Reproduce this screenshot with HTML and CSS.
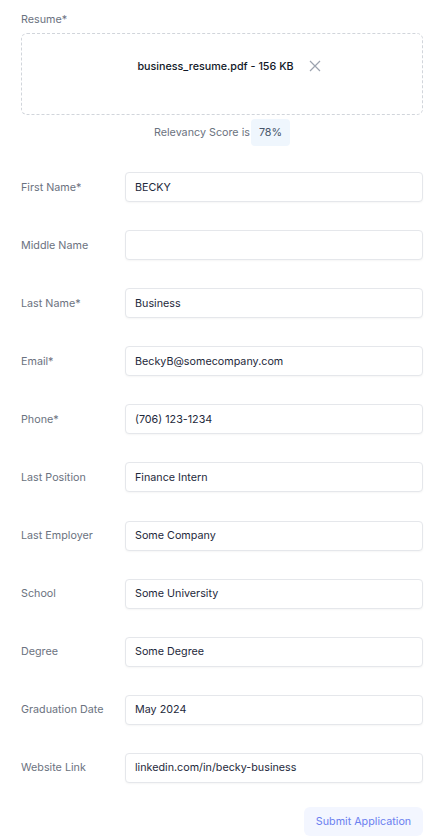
FILE: index.html
```html
<!DOCTYPE html>
<html lang="en">
<head>
    <meta charset="UTF-8">
    <meta name="viewport" content="width=device-width, initial-scale=1.0">
    <title>Application Form</title>
    <link rel="stylesheet" href="styles.css">
</head>
<body>
    <div class="form-container">
        <div class="resume-section">
            <label class="resume-label">Resume*</label>
            <div class="upload-box">
                <div class="file-row">
                    <span class="file-name">business_resume.pdf - 156 KB</span>
                    <button class="remove-btn" aria-label="Remove file">
                        <svg width="12" height="12" viewBox="0 0 12 12">
                            <path d="M1 1 L11 11 M11 1 L1 11" stroke="#9ca3af" stroke-width="1.2" fill="none"/>
                        </svg>
                    </button>
                </div>
            </div>
            <div class="score-row">
                <span>Relevancy Score is</span>
                <span class="score-badge">78%</span>
            </div>
        </div>

        <div class="fields">
            <div class="field-row">
                <label>First Name*</label>
                <input type="text" class="text-input" value="BECKY">
            </div>
            <div class="field-row">
                <label>Middle Name</label>
                <input type="text" class="text-input" value="">
            </div>
            <div class="field-row">
                <label>Last Name*</label>
                <input type="text" class="text-input" value="Business">
            </div>
            <div class="field-row">
                <label>Email*</label>
                <input type="text" class="text-input" value="BeckyB@somecompany.com">
            </div>
            <div class="field-row">
                <label>Phone*</label>
                <input type="text" class="text-input" value="(706) 123-1234">
            </div>
            <div class="field-row">
                <label>Last Position</label>
                <input type="text" class="text-input" value="Finance Intern">
            </div>
            <div class="field-row">
                <label>Last Employer</label>
                <input type="text" class="text-input" value="Some Company">
            </div>
            <div class="field-row">
                <label>School</label>
                <input type="text" class="text-input" value="Some University">
            </div>
            <div class="field-row">
                <label>Degree</label>
                <input type="text" class="text-input" value="Some Degree">
            </div>
            <div class="field-row">
                <label>Graduation Date</label>
                <input type="text" class="text-input" value="May 2024">
            </div>
            <div class="field-row">
                <label>Website Link</label>
                <input type="text" class="text-input" value="linkedin.com/in/becky-business">
            </div>
        </div>

        <div class="actions">
            <button class="submit-btn">Submit Application</button>
        </div>
    </div>
</body>
</html>
```

FILE: styles.css
```css
* {
    margin: 0;
    padding: 0;
    box-sizing: border-box;
    font-family: Inter, 'Noto Sans', sans-serif;
}

body {
    background-color: #fff;
    font-size: 10.75px;
    color: #6b7280;
}

.form-container {
    width: 402px;
    margin-left: 21px;
    padding-top: 13px;
}

.resume-label {
    display: block;
    line-height: 14px;
    margin-bottom: 6px;
}

.upload-box {
    border: 1px dashed #d1d5db;
    border-radius: 6px;
    height: 82px;
    padding-top: 24px;
}

.file-row {
    display: flex;
    justify-content: center;
    align-items: center;
    gap: 15px;
    height: 16px;
    padding-left: 14px;
}

.file-name {
    color: #111827;
    font-weight: 500;
}

.remove-btn {
    border: none;
    background: none;
    display: flex;
    cursor: pointer;
}

.score-row {
    display: flex;
    justify-content: center;
    align-items: center;
    margin-top: 4px;
}

.score-badge {
    background-color: #eff6fd;
    color: #475569;
    border-radius: 4px;
    padding: 0 8px;
    line-height: 27px;
    margin-left: 1px;
}

.fields {
    margin-top: 26px;
    display: flex;
    flex-direction: column;
    gap: 28.1px;
}

.field-row {
    display: flex;
    align-items: center;
}

.field-row label {
    width: 104px;
}

.text-input {
    flex: 1;
    height: 30px;
    border: 1px solid #e5e7eb;
    border-radius: 4px;
    padding: 0 9px;
    font-size: 10.75px;
    color: #1e293b;
    box-shadow: 0 1px 2px rgba(0,0,0,0.04);
    outline: none;
}

.actions {
    display: flex;
    justify-content: flex-end;
    margin-top: 24px;
}

.submit-btn {
    background-color: #f3f6ff;
    color: #6b80f0;
    border: none;
    border-radius: 6px;
    width: 119px;
    height: 29px;
    font-size: 10.75px;
    cursor: pointer;
}
```
